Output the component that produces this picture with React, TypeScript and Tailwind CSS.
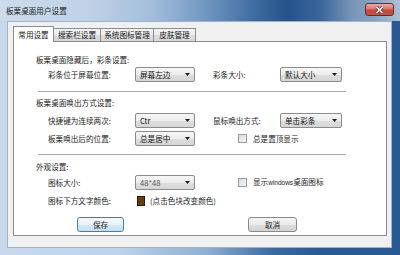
import React from "react";

function Arrow() {
  return (
    <svg width="5" height="3" viewBox="0 0 5 3" className="shrink-0">
      <path d="M0 0H5L2.5 3Z" fill="#1a1a1a" />
    </svg>
  );
}

function Combo({ text, w, muted }: { text: string; w: string; muted?: boolean }) {
  return (
    <div
      className={`${w} h-[15px] flex items-center justify-between rounded-[2px] border border-[#8c8c8c] bg-[linear-gradient(180deg,#f7f7f7_0%,#ececec_50%,#dedede_51%,#d6d6d6_100%)] pl-[4px] pr-[4px] shrink-0`}
    >
      <span className={muted ? "leading-[12px] text-[#555]" : "leading-[12px] text-[#111]"}>{text}</span>
      <Arrow />
    </div>
  );
}

function Check() {
  return (
    <div className="w-[9px] h-[9px] border border-[#9a9a9a] bg-[linear-gradient(135deg,#dcdcdc_0%,#f4f4f4_100%)] shrink-0" />
  );
}

function Sep() {
  return <div className="ml-[24px] w-[308px] h-px bg-[#a9a9a9]" />;
}

export default function App() {
  return (
    <div className="w-[400px] h-[255px] flex flex-col font-['Noto_Sans_CJK_SC',sans-serif] text-[7.6px] text-[#1a1a1a] bg-[linear-gradient(90deg,#c8d9ec_0%,#bed2e8_30%,#8eaed0_52%,#3a6a9f_68%,#2a5a92_80%,#295993_100%)] overflow-hidden">
      {/* title bar */}
      <div className="h-[21px] flex items-start justify-between bg-[linear-gradient(90deg,#cddcec_0%,#c0d2e6_22%,#a3bedb_38%,#6f95c0_52%,#3d6b9f_64%,#24538b_72%,#3a659b_80%,#7994b8_88%,#8ba3c2_94%,#aebfd3_100%)]">
        <div className="pl-[6px] pt-[5px] leading-[12px] text-[#1c1c1c]">板栗桌面用户设置</div>
        <div className="mt-[3px] mr-[6px] w-[29px] h-[13px] rounded-[3px] border border-[#6b2a24] bg-[linear-gradient(180deg,#e9aea4_0%,#d9776a_45%,#c8483a_55%,#c0524a_100%)] flex items-center justify-center">
          <svg width="9" height="8" viewBox="0 0 9 8">
            <path d="M1.5 1L7.5 7M7.5 1L1.5 7" stroke="#5a2a26" strokeWidth="3" />
            <path d="M1.5 1L7.5 7M7.5 1L1.5 7" stroke="#ffffff" strokeWidth="1.6" />
          </svg>
        </div>
      </div>
      {/* client area */}
      <div className="ml-[7px] mr-[8px] mb-[7px] flex-1 border border-[#9fb3cb] bg-[#f0f0f0] pl-[5px] pr-[4px] pt-[4px] pb-[11px] flex flex-col">
        {/* tabs */}
        <div className="h-[16px] flex items-end -mb-px relative z-10">
          <div className="w-[41px] h-[16px] bg-white border border-b-0 border-[#898c95] flex items-center justify-center leading-[12px]">
            常用设置
          </div>
          <div className="w-[47px] h-[13px] mb-px border border-b-0 border-l-0 border-[#898c95] bg-[linear-gradient(180deg,#f4f4f4_0%,#ebebeb_50%,#dddddd_51%,#d8d8d8_100%)] flex items-center justify-center leading-[12px]">
            搜索栏设置
          </div>
          <div className="w-[53px] h-[13px] mb-px border border-b-0 border-l-0 border-[#898c95] bg-[linear-gradient(180deg,#f4f4f4_0%,#ebebeb_50%,#dddddd_51%,#d8d8d8_100%)] flex items-center justify-center leading-[12px]">
            系统图标管理
          </div>
          <div className="w-[42px] h-[13px] mb-px border border-b-0 border-l-0 border-[#898c95] bg-[linear-gradient(180deg,#f4f4f4_0%,#ebebeb_50%,#dddddd_51%,#d8d8d8_100%)] flex items-center justify-center leading-[12px]">
            皮肤管理
          </div>
        </div>
        {/* panel */}
        <div className="flex-1 bg-white border border-[#898c95] flex flex-col pt-[12px] leading-[12px]">
          <div className="pl-[22px] h-[12px]">板栗桌面隐藏后，彩条设置:</div>
          <div className="mt-px h-[15px] flex items-center pl-[34px]">
            <div className="w-[87px]">彩条位于屏幕位置:</div>
            <Combo text="屏幕左边" w="w-[60px]" />
            <div className="ml-[18px] w-[67px]">彩条大小:</div>
            <Combo text="默认大小" w="w-[62px]" />
          </div>
          <div className="mt-[9px]">
            <Sep />
          </div>
          <div className="mt-[5px] pl-[22px] h-[12px]">板栗桌面唤出方式设置:</div>
          <div className="mt-[4px] h-[15px] flex items-center pl-[34px]">
            <div className="w-[87px]">快捷键为连续两次:</div>
            <Combo text="Ctr" w="w-[60px]" />
            <div className="ml-[18px] w-[67px]">鼠标唤出方式:</div>
            <Combo text="单击彩条" w="w-[62px]" />
          </div>
          <div className="mt-[3px] h-[15px] flex items-center pl-[34px]">
            <div className="w-[87px]">板栗唤出后的位置:</div>
            <Combo text="总是居中" w="w-[60px]" />
            <div className="ml-[43px]">
              <Check />
            </div>
            <div className="ml-[6px]">总是置顶显示</div>
          </div>
          <div className="mt-[8px]">
            <Sep />
          </div>
          <div className="mt-[6px] pl-[22px] h-[12px]">外观设置:</div>
          <div className="mt-[2px] h-[15px] flex items-center pl-[34px]">
            <div className="w-[87px]">图标大小:</div>
            <Combo text="48*48" w="w-[60px]" muted />
            <div className="ml-[43px]">
              <Check />
            </div>
            <div className="ml-[6px]">
              显示<span className="font-['Liberation_Sans',sans-serif] text-[6.5px]">windows</span>桌面图标
            </div>
          </div>
          <div className="mt-[4px] h-[14px] flex items-center pl-[34px]">
            <div className="w-[87px]">图标下方文字颜色:</div>
            <div className="ml-[2px] w-[8px] h-[10px] border border-[#2a1a0a] bg-[#6b3a10]" />
            <div className="ml-[5px]">(点击色块改变颜色)</div>
          </div>
          <div className="mt-[9px] h-[15px] flex pl-[63px]">
            <div className="w-[47px] h-[15px] rounded-[3px] border border-[#3c7fb1] bg-[linear-gradient(180deg,#f5fbfe_0%,#e6f3fb_50%,#d2e8f6_51%,#c6e1f3_100%)] flex items-center justify-center">
              保存
            </div>
            <div className="ml-[124px] w-[49px] h-[15px] rounded-[3px] border border-[#8a8a8a] bg-[linear-gradient(180deg,#f4f4f4_0%,#ebebeb_50%,#dddddd_51%,#d3d3d3_100%)] flex items-center justify-center">
              取消
            </div>
          </div>
        </div>
      </div>
    </div>
  );
}
